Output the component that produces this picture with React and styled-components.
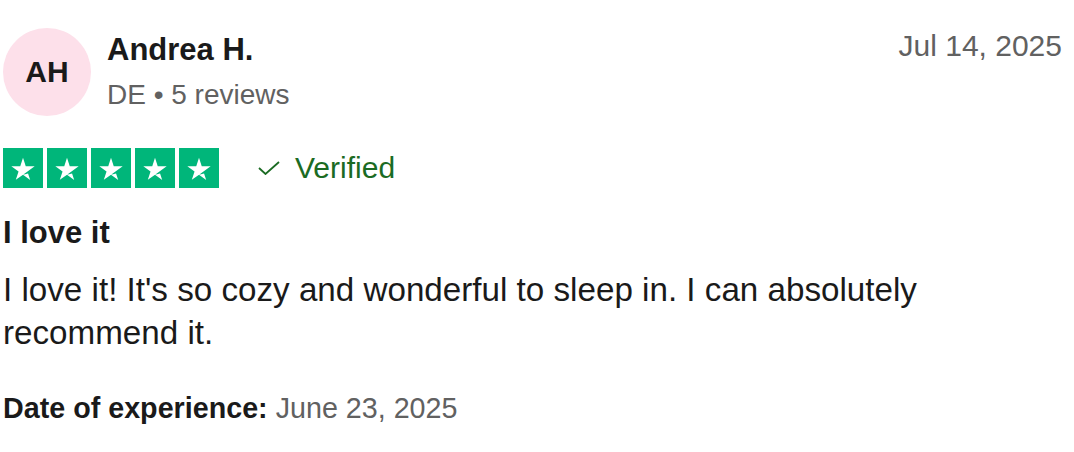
import React from "react";
import styled, { createGlobalStyle } from "styled-components";

const Global = createGlobalStyle`
  html, body { margin: 0; padding: 0; background: #ffffff; }
  body { font-family: "Liberation Sans", Arial, Helvetica, sans-serif; color: #1a1a1a; }
`;

const Card = styled.article`
  padding: 28px 12px 0 3px;
  display: flex;
  flex-direction: column;
`;

const Header = styled.header`
  display: flex;
  justify-content: space-between;
  align-items: flex-start;
`;

const Consumer = styled.div`
  display: flex;
  align-items: center;
  gap: 16px;
`;

const Avatar = styled.div`
  width: 88px;
  height: 88px;
  border-radius: 50%;
  background: #fde0ea;
  display: flex;
  align-items: center;
  justify-content: center;
  font-weight: 700;
  font-size: 30px;
  color: #1a1a1a;
`;

const Info = styled.div`
  display: flex;
  flex-direction: column;
  gap: 5px;
`;

const Name = styled.div`
  font-size: 31px;
  line-height: 40px;
  font-weight: 700;
`;

const Meta = styled.div`
  font-size: 28px;
  line-height: 40px;
  color: #616161;
`;

const PostDate = styled.time`
  font-size: 30px;
  line-height: 36px;
  color: #616161;
`;

const RatingRow = styled.div`
  display: flex;
  align-items: center;
  margin-top: 32px;
`;

const Stars = styled.div`
  display: flex;
  gap: 4px;
`;

const StarBox = styled.div`
  width: 40px;
  height: 40px;
  background: ${(p) => (p.$on ? "#00b67a" : "#dcdce6")};
  display: flex;
  align-items: center;
  justify-content: center;
`;

const Verified = styled.div`
  display: flex;
  align-items: center;
  gap: 15px;
  margin-left: 39px;
  color: #1b6b23;
  font-size: 30px;
  line-height: 36px;
`;

const Title = styled.h2`
  margin: 27px 0 0;
  font-size: 31px;
  line-height: 36px;
  font-weight: 700;
`;

const Body = styled.p`
  margin: 17px 0 0;
  font-size: 33.2px;
  line-height: 43px;
  max-width: 960px;
`;

const Experience = styled.p`
  margin: 36px 0 0;
  font-size: 28.7px;
  line-height: 36px;
  color: #616161;
  & > b {
    color: #1a1a1a;
    font-weight: 700;
  }
`;

const Star = () => (
  <svg width="40" height="40" viewBox="0 0 24 24" aria-hidden="true">
    <path
      fill="#ffffff"
      d="M12 16.0125L15.0417 15.2375L16.3125 19.1542L12 16.0125ZM19 10.95H13.6458L12 5.91251L10.3542 10.95H5L9.33333 14.0708L7.6875 19.1083L12.0208 15.9875L14.6875 14.0708L19 10.95Z"
    />
  </svg>
);

const Check = () => (
  <svg width="22" height="14" viewBox="0 0 22 14" aria-hidden="true">
    <path d="M1 7 L7.5 13 L21 1" fill="none" stroke="#1b6b23" strokeWidth="1.8" />
  </svg>
);

export default function App() {
  return (
    <>
      <Global />
      <Card>
        <Header>
          <Consumer>
            <Avatar>AH</Avatar>
            <Info>
              <Name>Andrea H.</Name>
              <Meta>DE • 5 reviews</Meta>
            </Info>
          </Consumer>
          <PostDate>Jul 14, 2025</PostDate>
        </Header>
        <RatingRow>
          <Stars>
            {[0, 1, 2, 3, 4].map((i) => (
              <StarBox key={i} $on>
                <Star />
              </StarBox>
            ))}
          </Stars>
          <Verified>
            <Check />
            <span>Verified</span>
          </Verified>
        </RatingRow>
        <Title>I love it</Title>
        <Body>
          I love it! It's so cozy and wonderful to sleep in. I can absolutely recommend it.
        </Body>
        <Experience>
          <b>Date of experience:</b> June 23, 2025
        </Experience>
      </Card>
    </>
  );
}
